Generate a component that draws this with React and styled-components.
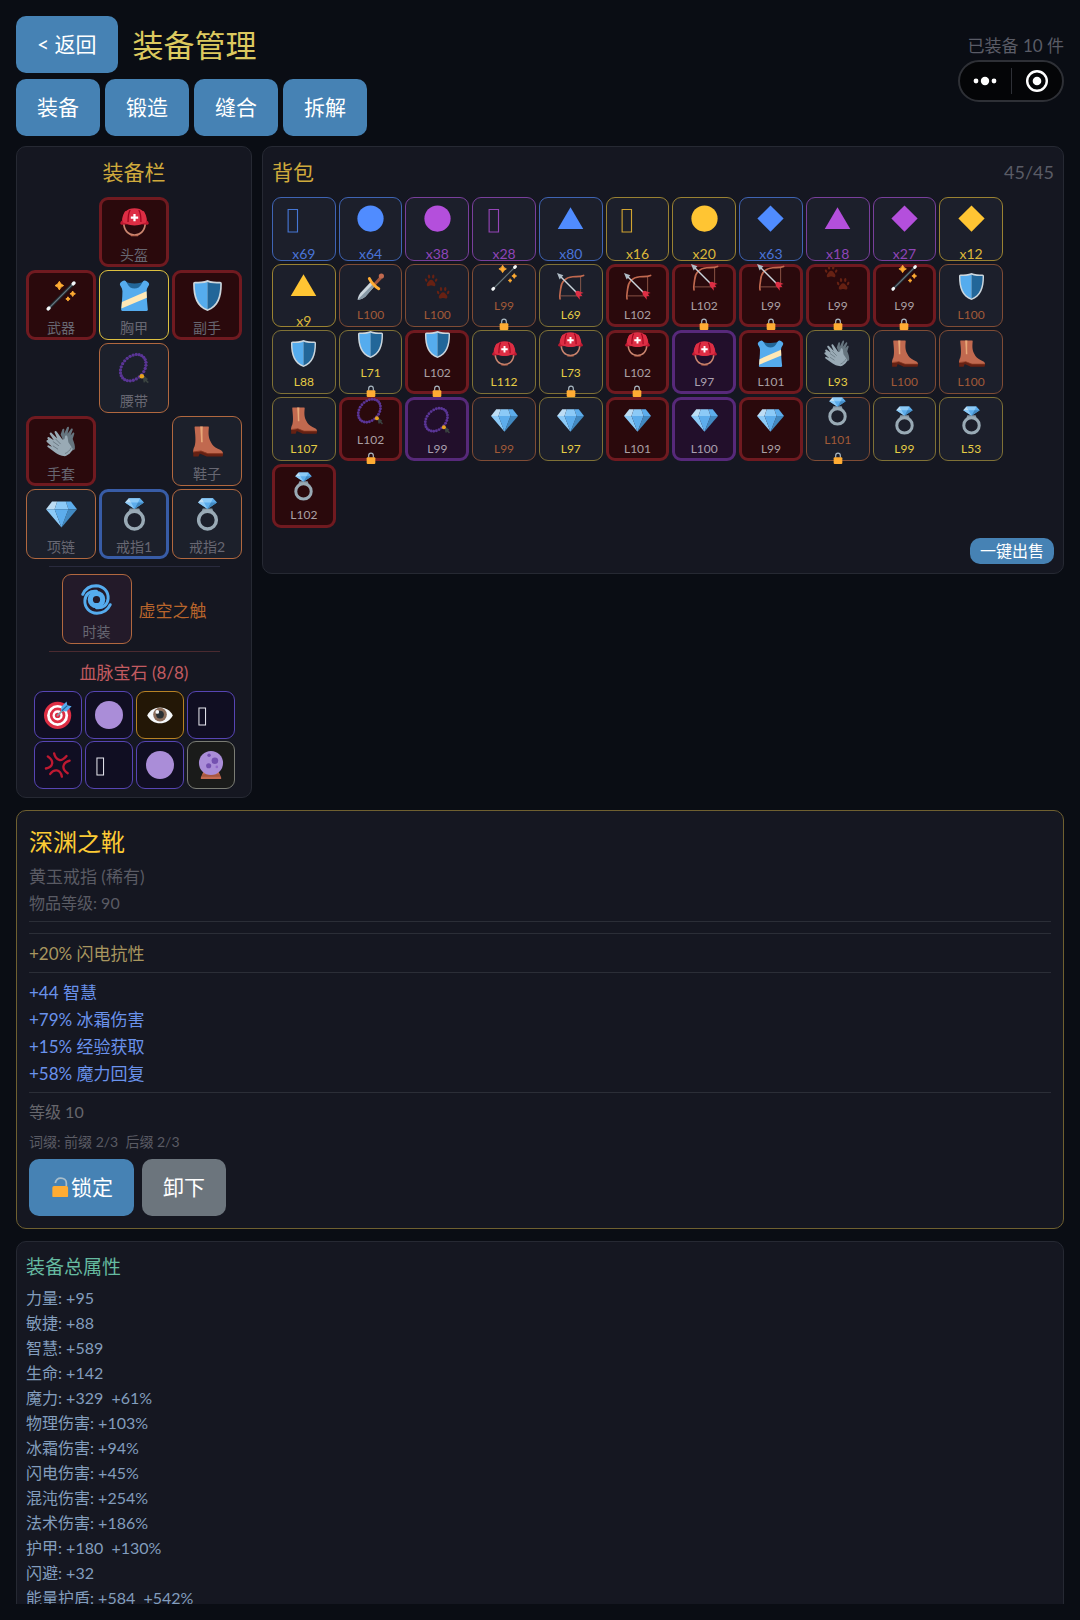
import styled, { createGlobalStyle, css } from "styled-components";

const GlobalStyle = createGlobalStyle`
  * {
    box-sizing: border-box;
  }

  body {
    margin: 0;
    background: #0a0d14;
    font-family: Lato, "Noto Sans CJK SC", sans-serif;
    color: #e8e8ec;
  }

  button {
    font-family: inherit;
    cursor: pointer;
  }
`;

const Page = styled.div`
  height: 100vh;
  padding: 16px;
  position: relative;
`;

const Content = styled.main`
  height: 100%;
  display: flex;
  flex-direction: column;
  overflow-y: auto;
  scrollbar-width: none;

  > * {
    flex-shrink: 0;
  }
`;

const Header = styled.header`
  display: flex;
  align-items: center;
  gap: 15px;
`;

const Title = styled.h1`
  margin: 0;
  flex: 1;
  font-size: 31px;
  font-weight: 400;
  line-height: 40px;
  color: #dcc95f;
`;

const EquippedCount = styled.span`
  font-size: 17px;
  color: #5a5c66;
`;

const Button = styled.button`
  display: flex;
  align-items: center;
  justify-content: center;
  height: 57px;
  padding: 0 21px 3px;
  border: none;
  border-radius: 10px;
  background: ${({ $muted }) => ($muted ? "#6c757d" : "#4682b4")};
  color: #fff;
  font-size: 21px;
`;

const SmallButton = styled(Button)`
  height: 26px;
  padding: 0 10px 2px;
  font-size: 16px;
  margin: 10px 0 0 auto;
`;

const Tabs = styled.nav`
  display: flex;
  gap: 5px;
  margin: 6px 0 10px;
`;

const Capsule = styled.div`
  position: absolute;
  top: 60px;
  right: 16px;
  width: 106px;
  height: 42px;
  display: flex;
  align-items: center;
  border: 2px solid #2e3036;
  border-radius: 21px;
  background: #040507;
`;

const CapsuleButton = styled.button`
  flex: 1;
  height: 26px;
  padding: 0;
  border: none;
  background: none;

  & + & {
    border-left: 1px solid #2e3036;
  }

  svg {
    display: block;
    margin: auto;
  }
`;

const Panels = styled.div`
  display: flex;
  align-items: flex-start;
  gap: 10px;
`;

const Panel = styled.section`
  padding: 9px;
  border: 1px solid #262933;
  border-radius: 10px;
  background: #151721;
`;

const EquipPanel = styled(Panel)`
  width: 236px;
  padding-bottom: 8px;
  display: flex;
  flex-direction: column;
  align-items: center;
`;

const BagPanel = styled(Panel)`
  flex: 1;
  min-width: 0;
`;

const PanelTitle = styled.h2`
  margin: 0;
  font-size: 21px;
  font-weight: 400;
  line-height: 32px;
  color: #cfaa3c;
`;

const SlotGrid = styled.div`
  display: grid;
  grid-template-columns: repeat(3, 70px);
  grid-template-areas:
    ". helmet ."
    "weapon chest offhand"
    ". belt ."
    "gloves . boots"
    "amulet ring1 ring2";
  gap: 3px;
  margin-top: 9px;
`;

const tones = {
  red: css`
    border: 3px solid #701a20;
    background: #2a090c;
  `,
  purple: css`
    border: 3px solid #57297a;
    background: #220f2b;
  `,
  blue: css`
    border: 3px solid #385ca6;
    background: #1c202b;
  `,
  orange: css`
    border: 1px solid #b1683f;
    background: #1c202b;
  `,
  gold: css`
    border: 1px solid #dcc040;
    background: #1c202b;
  `,
  fashion: css`
    border: 1px solid #b1683f;
    background: #231a29;
  `,
  dimOrange: css`
    border: 1px solid #7f4c35;
    background: #1c1f2b;
  `,
  dimGold: css`
    border: 1px solid #7f7136;
    background: #1c1f2b;
  `,
  stackBlue: css`
    border: 1px solid #3f64b4;
    background: #1c1f2b;
  `,
  stackPurple: css`
    border: 1px solid #793f9c;
    background: #1c1f2b;
  `,
  stackGold: css`
    border: 1px solid #9a8232;
    background: #1c1f2b;
  `,
  gem: css`
    border: 1px solid #5745b4;
    background: #100e22;
  `,
  gemGold: css`
    border: 1px solid #b88224;
    background: #231706;
  `,
  gemGray: css`
    border: 1px solid #7a7c74;
    background: #1a1b1a;
  `,
};

const Cell = styled.button`
  display: flex;
  flex-direction: column;
  align-items: center;
  justify-content: center;
  padding: 0;
  border-radius: 9px;
  ${({ $tone }) => tones[$tone]}
`;

const Slot = styled(Cell)`
  width: 70px;
  height: 70px;
  grid-area: ${({ $area }) => $area};
`;

const IconBox = styled.span`
  display: flex;
  flex-shrink: 0;
  align-items: center;
  height: ${({ $height }) => $height}px;

  svg {
    display: block;
    overflow: visible;
  }
`;

const SlotLabel = styled.span`
  font-size: 14px;
  line-height: 20px;
  color: #676772;
`;

const Divider = styled.hr`
  width: 171px;
  height: 1px;
  margin: 7px 0;
  border: none;
  background: ${({ $color }) => $color};
`;

const FashionRow = styled.div`
  display: flex;
  align-items: center;
  gap: 7px;
`;

const FashionName = styled.span`
  font-size: 17px;
  color: #b8652c;
`;

const GemTitle = styled.h3`
  margin: 0 0 4px;
  font-size: 17px;
  font-weight: 400;
  line-height: 28px;
  color: #c25b60;
`;

const GemGrid = styled.div`
  display: grid;
  grid-template-columns: repeat(4, 48px);
  gap: 2px 3px;
`;

const Gem = styled(Cell)`
  height: 48px;
`;

const BagHeader = styled.div`
  display: flex;
  justify-content: space-between;
  align-items: center;
`;

const BagCount = styled.span`
  font-size: 18px;
  color: #5a5c66;
`;

const BagGrid = styled.div`
  display: grid;
  grid-template-columns: repeat(11, 1fr);
  gap: 3px;
  max-width: 731px;
  margin-top: 9px;
`;

const BagItem = styled.div`
  min-width: 0;
  aspect-ratio: 1;
`;

const BagCell = styled(Cell)`
  width: 100%;
  height: 100%;
`;

const Level = styled.span`
  font-size: 12px;
  line-height: 18px;
  color: ${({ $color }) => $color};
`;

const StackCount = styled.span`
  font-size: 14px;
  line-height: 20px;
  color: ${({ $color }) => $color};
`;

const DetailPanel = styled(Panel)`
  display: flex;
  flex-direction: column;
  margin: 12px 0;
  padding: 12px;
  border-color: #6f6030;
`;

const DetailDivider = styled(Divider)`
  width: 100%;
  margin: 5px 0 6px;
`;

const ItemName = styled.h2`
  margin: 0 0 2px;
  font-size: 24px;
  font-weight: 400;
  line-height: 38px;
  color: #fccb35;
`;

const Line = styled.div`
  font-size: 17px;
  line-height: 27px;
  color: ${({ $color }) => $color};
`;

const SmallLine = styled(Line)`
  font-size: 16px;
  line-height: 26px;
`;

const AffixLine = styled(Line)`
  margin: 4px 0;
  font-size: 14px;
  line-height: 26px;
  white-space: pre;
`;

const Actions = styled.div`
  display: flex;
  gap: 8px;
`;

const StatsTitle = styled(PanelTitle)`
  font-size: 19px;
  color: #65baa0;
`;

const StatList = styled.ul`
  margin: 2px 0 0;
  padding: 0;
  list-style: none;
  font-size: 16px;
  line-height: 25px;
  color: #829dbd;
  white-space: pre;
`;

const beadAngles = Array.from({ length: 26 }, (_, i) => (i * 2 * Math.PI) / 26);

const Paw = (props) => (
  <g fill="#662113" {...props}>
    <path d="M8 7.5c-2.500 0-3 2-4.500 3.500S1.500 16 4 16c1.500 0 2.500-.8 4-.8s2.500.8 4 .8c2.500 0 2-3.500.5-5S10.500 7.500 8 7.500z" />
    <ellipse cx="1.3" cy="8" rx="1.5" ry="2.4" transform="rotate(-25 1.3 8)" />
    <ellipse cx="5.2" cy="3.3" rx="1.6" ry="2.7" transform="rotate(-8 5.2 3.3)" />
    <ellipse cx="10.8" cy="3.3" rx="1.6" ry="2.7" transform="rotate(8 10.8 3.3)" />
    <ellipse cx="14.7" cy="8" rx="1.5" ry="2.4" transform="rotate(25 14.7 8)" />
  </g>
);

const Spark = ({ x, y, r }) => {
  const q = r * 0.25;
  return (
    <path
      fill="#FFAC33"
      stroke="#FFAC33"
      strokeWidth="1"
      strokeLinejoin="round"
      d={`M${x} ${y - r}Q${x + q} ${y - q} ${x + r} ${y}Q${x + q} ${y + q} ${x} ${y + r}Q${x - q} ${y + q} ${x - r} ${y}Q${x - q} ${y - q} ${x} ${y - r}z`}
    />
  );
};

const drawings = {
  helmet: (
    <>
      <path d="M5.5 18c0 9 5 14.5 12.5 14.5S30.5 27 30.5 18" fill="none" stroke="#C9856F" strokeWidth="2" />
      <path d="M13 32c2 1.3 8 1.3 10 0l-1 2h-8z" fill="#C1694F" />
      <path d="M3.500 17C3.500 7 9 1.500 18 1.500S32.500 7 32.500 17c-5-1.500-24-1.500-29 0z" fill="#DD2E44" />
      <path d="M1.500 19c0-2 1.500-3 3-3.500 5-1.700 22-1.700 27 0 1.500.5 3 1.500 3 3.500 0 1.500-1 1.700-2.500 1.500-8-1.200-20-1.200-28 0-1.500.2-2.500 0-2.500-1.500z" fill="#BE1931" />
      <path d="M7 5c-2 4-2.500 8-2.500 13 3 .5 5.500 2.500 8.500 3 3 .6 7 .6 10 0 3-.5 5.500-2.500 8.500-3C31.500 13 31 9 29 5" fill="#DD2E44" />
      <path d="M13 3.500c-2 3-2.500 8-2.500 14M23 3.500c2 3 2.500 8 2.500 14" fill="none" stroke="#A0041E" strokeWidth="1.5" />
      <path d="M16.700 8h2.600v3h3v2.600h-3v3h-2.600v-3h-3V11h3z" fill="#fff" />
    </>
  ),
  wand: (
    <>
      <path d="M2.500 33.500l30-30" stroke="#1f2329" strokeWidth="4" strokeLinecap="round" />
      <path d="M5 31L30 6" stroke="#66757F" strokeWidth="1.5" />
      <path d="M2.500 33.500l1-1M31.500 4.500l1-1" stroke="#F5F8FA" strokeWidth="4" strokeLinecap="round" />
      <Spark x={15.5} y={6.5} r={5} />
      <Spark x={31} y={16} r={3.2} />
      <Spark x={25.5} y={22} r={2.5} />
    </>
  ),
  shirt: (
    <>
      <path d="M6 1c4 4 20 4 24 0l-4 11H10z" fill="#226699" />
      <path d="M6 .5C7.500.5 8.500 2 9.500 4c2 4 5 6 8.500 6s6.500-2 8.500-6c1-2 2-3.500 3.500-3.500 2.500.5 5 2.500 5 4.500S32 9 32 13c0 8 1 15 1.500 21.500 0 1-1 1.500-2.500 1.500H5c-1.500 0-2.500-.5-2.500-1.500C3 28 4 21 4 13 4 9 1 7 1 5S3.500 1 6 .5z" fill="#55ACEE" />
      <path d="M32 13l.4 7.500L2.800 33l.6-7.500z" fill="#FFE8B6" />
    </>
  ),
  shield: (
    <>
      <path d="M18 0c4 2 10 2 14.500 2 1.500 0 2.200 1 2.200 2.500C34.700 20 31 31 18 36 5 31 1.300 20 1.300 4.500 1.300 3 2 2 3.500 2 8 2 14 2 18 0z" fill="#CCD6DD" />
      <path d="M18 2.200C14 4 8 4 3.200 4 3.200 19.500 7 29.500 18 34z" fill="#55ACEE" />
      <path d="M18 2.200C22 4 28 4 32.800 4 32.800 19.500 29 29.500 18 34z" fill="#226699" />
    </>
  ),
  beads: (
    <>
      <g fill="#5a3596">
        {beadAngles.map((a) => (
          <circle
            key={a}
            cx={16.5 + 12.2 * Math.cos(a) - 8.5 * Math.sin(a)}
            cy={17 - 12 * Math.cos(a) - 9.5 * Math.sin(a)}
            r="1.9"
          />
        ))}
      </g>
      <path d="M27 28l7 6.500M28 27l5 4M29 30l.5 4" stroke="#3a4340" strokeWidth="2" />
      <circle cx="26.5" cy="27" r="2.7" fill="#E8A31E" />
    </>
  ),
  gloves: (
    <>
      <path d="M17 10l2-6c.5-1.500 2.500-1 2.300.5L21 9l3.500-7.500c.7-1.400 2.700-.6 2.200 1L25 9l4-5.500c1-1.200 2.600-.2 2 1.200L28.500 11l2.500-3c1-1 2.300 0 1.800 1.300L31 15c2 5 3 8 2.500 12L26 31z" fill="#66757F" />
      <path d="M2 15c-1.200-1.300.2-3 1.700-2L9 16.500 4.500 9.500C3.600 8 5.500 6.800 6.600 8L13 14.500 10 7.500c-.5-1.600 1.300-2.500 2.300-1.200l6.500 9.200c2 .8 3 0 3.200-3 .2-1.800 2.400-2 3 .2l1 6.300 5 7.500c-1 4-5 7.500-9 8.500-5-.5-8-2-11-4l-9-6.500c-1.200-1 0-2.700 1.400-2l3.600 1.700L1 18.500c-1.200-1 0-3 1.500-2z" fill="#99AAB5" />
      <path d="M8 18l7 5M11 15l6 6M8 23l6 4M22 32c3-1 6-4 7.500-7" fill="none" stroke="#66757F" strokeWidth="1" />
    </>
  ),
  boot: (
    <>
      <path d="M1.500 28v7.500h6L9 32l8 3.500h18c1 0 1.500-3 1-4.500z" fill="#662113" />
      <path d="M3.500.5h15.300c.6 0 .9.400.8 1-.8 8-.5 12 2.400 17.500 1.500 3 4 6 8 7.500 4 1.600 6 3 6 5.500H18.500l-8-3-9 1.500c-.3-2.500.2-4.500 1.500-7C5 18 3.500 8 3 1.500c0-.6.2-1 .5-1z" fill="#C1694F" />
      <path d="M9.500.5h3c-.3 6-.3 13 0 18.500h-2C10.500 14 10 7 9.500.5z" fill="#E8A878" />
      <path d="M1.500 30l9-1 8 3.200H36" fill="none" stroke="#8a3822" strokeWidth="1" />
    </>
  ),
  gem: (
    <>
      <path fill="#BDDDF4" d="M13 3H7l-7 9h10z" />
      <path fill="#5DADEC" d="M36 12l-7-9h-6l3 9z" />
      <path fill="#4289C1" d="M26 12h10L18 33z" />
      <path fill="#8CCAF7" d="M10 12H0l18 21zm3-9l-3 9h16l-3-9z" />
      <path fill="#5DADEC" d="M18 33l-8-21h16z" />
    </>
  ),
  ring: (
    <>
      <path d="M12.500 11h11l2 5h-15z" fill="#8899A6" />
      <circle cx="18" cy="24.5" r="10.3" fill="none" stroke="#99AAB5" strokeWidth="4" />
      <path d="M11.500-.8h13l4.500 5L18 11.500 7 4.200z" fill="#5DADEC" />
      <path d="M11.500-.8h13L22 4.200h-8zM7 4.200h7l4 7.300z" fill="#8CCAF7" />
      <path d="M11.500-.8L14 4.200H7z" fill="#BDDDF4" />
      <path d="M29 4.200h-7l-4 7.300z" fill="#4289C1" />
    </>
  ),
  cyclone: (
    <g fill="none" stroke="#55ACEE" strokeLinecap="round">
      <circle cx="18" cy="18" r="7.2" strokeWidth="6" />
      <path d="M2 12C5 5.500 11 2 17.500 2 26 2.300 32 8.500 31.500 17 31 24 25.500 28.500 18 27.500" strokeWidth="3.4" />
      <path d="M34 24C31 30.500 25 34 18.500 34 10 33.700 4 27.500 4.500 19 5 12 10.500 7.500 18 8.500" strokeWidth="3.4" />
    </g>
  ),
  target: (
    <>
      <circle cx="17.5" cy="18.5" r="17.5" fill="#DD2E44" />
      <circle cx="17.5" cy="18.5" r="13.5" fill="#fff" />
      <circle cx="17.5" cy="18.5" r="10" fill="#DD2E44" />
      <circle cx="17.5" cy="18.5" r="6.5" fill="#fff" />
      <circle cx="17.5" cy="18.5" r="3.5" fill="#DD2E44" />
      <path d="M17.500 18.500L29 7" stroke="#8899A6" strokeWidth="2.5" strokeLinecap="round" />
      <path d="M22 13l.5-6L29 .5l1 5 5.500 1.200L29 13.500z" fill="#55ACEE" />
      <path d="M23 12.500L30 6" stroke="#226699" strokeWidth="1.5" />
    </>
  ),
  orb: <circle cx="18" cy="18" r="18" fill="#AA8DD8" />,
  eye: (
    <>
      <path d="M1.500 18.500C5 12 11 8.500 18 8.500s13 3.500 16.500 10C31 25 25 28.500 18 28.500S5 25 1.500 18.500z" fill="#F5F8FA" />
      <circle cx="18" cy="17.5" r="8.8" fill="#8A6D5B" />
      <circle cx="18" cy="17.5" r="5" fill="#292F33" />
      <circle cx="14.5" cy="14" r="2.4" fill="#F5F8FA" />
    </>
  ),
  anger: (
    <g fill="none" stroke="#BE1931" strokeWidth="3" strokeLinecap="round">
      <path d="M13 3c1 5 3 7.500 6.500 8.500S26 10 29 6.500" />
      <path d="M33 12.500c-5 1.500-7.500 3.500-8 7s1 6 5.500 9" />
      <path d="M23 33c-1-5-3-7.500-6.500-8s-6 1-8.500 4.500" />
      <path d="M2.500 22.500c5-1 7.500-3 8-6.500s-1-6-5.500-9" />
    </g>
  ),
  crystal: (
    <>
      <path d="M8 27h20l3 7c.5 1.300 0 2-1.200 2H6.200C5 36 4.500 35.300 5 34z" fill="#C1694F" />
      <path d="M7 30h22l1 3H6z" fill="#A5563F" />
      <circle cx="18" cy="15.5" r="15.5" fill="#AA8DD8" />
      <circle cx="23" cy="12.5" r="4.3" fill="#7450B0" />
      <circle cx="15" cy="19" r="3.3" fill="#7450B0" />
      <circle cx="15.5" cy="5.5" r="2.2" fill="#7450B0" />
      <circle cx="25.5" cy="20.5" r="1.7" fill="#9268CA" />
    </>
  ),
  dagger: (
    <>
      <path d="M24 17L11 31.500C8 34 4 35.500.8 35.500 1.200 32 3 28.500 5 26L18.500 11.500z" fill="#CCD6DD" />
      <path d="M21.500 14.500L.8 35.500C4 35.500 8 34 11 31.500L24 17z" fill="#8899A6" />
      <path d="M22 14l8-9 3 3-8.500 8.500z" fill="#A0553C" />
      <circle cx="32.5" cy="4" r="3.5" fill="#C1694F" />
      <path d="M16.500 7.500c2.500 5 7 10 12.500 13.500" stroke="#FFAC33" strokeWidth="4" strokeLinecap="round" fill="none" />
    </>
  ),
  paws: (
    <>
      <Paw transform="translate(1.5 1.5)" />
      <Paw transform="translate(17.5 18)" />
    </>
  ),
  bow: (
    <>
      <path d="M31.500 4v26.500H4.500" stroke="#A86A56" strokeWidth="1" fill="none" />
      <path d="M4 34.500c-1-6 .5-9 .8-13C5.500 12 11 6 21 5c5-.5 9 .5 14.500-1.800" fill="none" stroke="#C1694F" strokeWidth="2.2" strokeLinecap="round" />
      <path d="M4 4l25 25" stroke="#CCD6DD" strokeWidth="2" />
      <path d="M0 0l8.500 3-5 5.500z" fill="#AEBBC5" />
      <path d="M24.500 24.500l3.500-1 7.500 3-4 1 2.500 3.500-4-.5.5 5-5.500-6.500z" fill="#DD2E44" />
    </>
  ),
  lock: (
    <>
      <path d="M11 17v-6c0-4.500 3-7.500 7-7.500s7 3 7 7.500v6" fill="none" stroke="#AAB8C2" strokeWidth="3.5" />
      <rect x="5" y="16" width="26" height="20" rx="3" fill="#FFAC33" />
    </>
  ),
  unlock: (
    <>
      <path d="M9 12c1-5 4-8.500 9.500-8.500S28 7 28 12v6" fill="none" stroke="#A9BECB" strokeWidth="3" />
      <rect x="4" y="17" width="27" height="20" rx="3" fill="#FFAC33" />
    </>
  ),
  circle: <circle cx="18" cy="18" r="17.5" fill="currentColor" />,
  triangle: <path d="M18 3l17 29H1z" fill="currentColor" />,
  diamond: <path d="M18 .5L35.500 18 18 35.500.5 18z" fill="currentColor" />,
  missing: <path d="M-2.500 6h12.500v30H-2.500z" fill="none" stroke="currentColor" strokeWidth="1.5" opacity=".8" />,
  missingGem: <path d="M2.500 9h8.500v22H2.500z" fill="none" stroke="currentColor" strokeWidth="1.3" />,
};

const Icon = ({ name, size, color }) => (
  <svg width={size} height={size} viewBox="0 0 36 36" color={color} aria-hidden="true">
    {drawings[name]}
  </svg>
);

const TABS = ["装备", "锻造", "缝合", "拆解"];

const SLOTS = [
  ["helmet", "helmet", "头盔", "red"],
  ["weapon", "wand", "武器", "red"],
  ["chest", "shirt", "胸甲", "gold"],
  ["offhand", "shield", "副手", "red"],
  ["belt", "beads", "腰带", "orange"],
  ["gloves", "gloves", "手套", "red"],
  ["boots", "boot", "鞋子", "orange"],
  ["amulet", "gem", "项链", "orange"],
  ["ring1", "ring", "戒指1", "blue"],
  ["ring2", "ring", "戒指2", "orange"],
];

const GEMS = [
  ["target", "gem"],
  ["orb", "gem"],
  ["eye", "gemGold"],
  ["missingGem", "gem"],
  ["anger", "gem"],
  ["missingGem", "gem"],
  ["orb", "gem"],
  ["crystal", "gemGray"],
];

const STACK_COLORS = {
  stackBlue: ["#508cff", "#4a74d8"],
  stackPurple: ["#b44fdc", "#8f45b8"],
  stackGold: ["#ffc533", "#dcb83a"],
};

const LEVEL_COLORS = {
  red: "#aaa0a4",
  purple: "#aaa0b0",
  dimOrange: "#a15a38",
  dimGold: "#e6cd45",
};

const STACKS = [
  ["missing", "stackBlue", 69],
  ["circle", "stackBlue", 64],
  ["circle", "stackPurple", 38],
  ["missing", "stackPurple", 28],
  ["triangle", "stackBlue", 80],
  ["missing", "stackGold", 16],
  ["circle", "stackGold", 20],
  ["diamond", "stackBlue", 63],
  ["triangle", "stackPurple", 18],
  ["diamond", "stackPurple", 27],
  ["diamond", "stackGold", 12],
  ["triangle", "stackGold", 9],
];

const ITEMS = [
  ["dagger", "dimOrange", 100],
  ["paws", "dimOrange", 100],
  ["wand", "dimOrange", 99, true],
  ["bow", "dimGold", 69],
  ["bow", "red", 102],
  ["bow", "red", 102, true],
  ["bow", "red", 99, true],
  ["paws", "red", 99, true],
  ["wand", "red", 99, true],
  ["shield", "dimOrange", 100],
  ["shield", "dimGold", 88],
  ["shield", "dimGold", 71, true],
  ["shield", "red", 102, true],
  ["helmet", "dimGold", 112],
  ["helmet", "dimGold", 73, true],
  ["helmet", "red", 102, true],
  ["helmet", "purple", 97],
  ["shirt", "red", 101],
  ["gloves", "dimGold", 93],
  ["boot", "dimOrange", 100],
  ["boot", "dimOrange", 100],
  ["boot", "dimGold", 107],
  ["beads", "red", 102, true],
  ["beads", "purple", 99],
  ["gem", "dimOrange", 99],
  ["gem", "dimGold", 97],
  ["gem", "red", 101],
  ["gem", "purple", 100],
  ["gem", "red", 99],
  ["ring", "dimOrange", 101, true],
  ["ring", "dimGold", 99],
  ["ring", "dimGold", 53],
  ["ring", "red", 102],
];

const MODS = ["+44 智慧", "+79% 冰霜伤害", "+15% 经验获取", "+58% 魔力回复"];

const STATS = [
  "力量: +95",
  "敏捷: +88",
  "智慧: +589",
  "生命: +142",
  "魔力: +329  +61%",
  "物理伤害: +103%",
  "冰霜伤害: +94%",
  "闪电伤害: +45%",
  "混沌伤害: +254%",
  "法术伤害: +186%",
  "护甲: +180  +130%",
  "闪避: +32",
  "能量护盾: +584  +542%",
];

const EquipSlot = ({ area, icon, label, tone }) => (
  <Slot $area={area} $tone={tone}>
    <IconBox $height={45}>
      <Icon name={icon} size={31} />
    </IconBox>
    <SlotLabel>{label}</SlotLabel>
  </Slot>
);

const StackCell = ({ icon, tone, count }) => {
  const [fill, text] = STACK_COLORS[tone];
  return (
    <BagItem>
      <BagCell $tone={tone}>
        <IconBox $height={51}>
          <Icon name={icon} size={27} color={fill} />
        </IconBox>
        <StackCount $color={text}>x{count}</StackCount>
      </BagCell>
    </BagItem>
  );
};

const ItemCell = ({ icon, tone, level, locked }) => (
  <BagItem>
    <BagCell $tone={tone}>
      <IconBox $height={39}>
        <Icon name={icon} size={27} />
      </IconBox>
      <Level $color={LEVEL_COLORS[tone]}>L{level}</Level>
      {locked && (
        <IconBox $height={18}>
          <Icon name="lock" size={12} />
        </IconBox>
      )}
    </BagCell>
  </BagItem>
);

const App = () => {
  return (
    <Page>
      <GlobalStyle />
      <Content>
        <Header>
          <Button>{"< 返回"}</Button>
          <Title>装备管理</Title>
          <EquippedCount>已装备 10 件</EquippedCount>
        </Header>
        <Tabs>
          {TABS.map((tab) => (
            <Button key={tab}>{tab}</Button>
          ))}
        </Tabs>

        <Panels>
          <EquipPanel>
            <PanelTitle>装备栏</PanelTitle>
            <SlotGrid>
              {SLOTS.map(([area, icon, label, tone]) => (
                <EquipSlot key={area} area={area} icon={icon} label={label} tone={tone} />
              ))}
            </SlotGrid>
            <Divider $color="#292a3d" />
            <FashionRow>
              <EquipSlot icon="cyclone" label="时装" tone="fashion" />
              <FashionName>虚空之触</FashionName>
            </FashionRow>
            <Divider $color="#4a2a30" />
            <GemTitle>血脉宝石 (8/8)</GemTitle>
            <GemGrid>
              {GEMS.map(([icon, tone], i) => (
                <Gem key={i} $tone={tone} aria-label={`血脉宝石 ${i + 1}`}>
                  <IconBox $height={28}>
                    <Icon name={icon} size={28} color="#e8e8f0" />
                  </IconBox>
                </Gem>
              ))}
            </GemGrid>
          </EquipPanel>

          <BagPanel>
            <BagHeader>
              <PanelTitle>背包</PanelTitle>
              <BagCount>45/45</BagCount>
            </BagHeader>
            <BagGrid>
              {STACKS.map(([icon, tone, count]) => (
                <StackCell key={count} icon={icon} tone={tone} count={count} />
              ))}
              {ITEMS.map(([icon, tone, level, locked], i) => (
                <ItemCell key={i} icon={icon} tone={tone} level={level} locked={locked} />
              ))}
            </BagGrid>
            <SmallButton>一键出售</SmallButton>
          </BagPanel>
        </Panels>

        <DetailPanel>
          <ItemName>深渊之靴</ItemName>
          <Line $color="#5a5b64">黄玉戒指 (稀有)</Line>
          <SmallLine $color="#5a5b64">物品等级: 90</SmallLine>
          <DetailDivider $color="#2b2e37" />
          <DetailDivider $color="#2b2e37" />
          <Line $color="#a8965f">+20% 闪电抗性</Line>
          <DetailDivider $color="#2b2e37" />
          {MODS.map((mod) => (
            <Line key={mod} $color="#6a92ec">
              {mod}
            </Line>
          ))}
          <DetailDivider $color="#2b2e37" />
          <SmallLine $color="#66666c">等级 10</SmallLine>
          <AffixLine $color="#5a5b64">{"词缀: 前缀 2/3  后缀 2/3"}</AffixLine>
          <Actions>
            <Button>
              <Icon name="unlock" size={21} />
              锁定
            </Button>
            <Button $muted>卸下</Button>
          </Actions>
        </DetailPanel>

        <Panel>
          <StatsTitle>装备总属性</StatsTitle>
          <StatList>
            {STATS.map((stat) => (
              <li key={stat}>{stat}</li>
            ))}
          </StatList>
        </Panel>
      </Content>

      <Capsule>
        <CapsuleButton aria-label="更多">
          <svg width="24" height="10" viewBox="0 0 24 10" fill="#fff">
            <circle cx="3" cy="5" r="2.4" />
            <circle cx="12" cy="5" r="4.2" />
            <circle cx="21" cy="5" r="2.4" />
          </svg>
        </CapsuleButton>
        <CapsuleButton aria-label="关闭">
          <svg width="24" height="24" viewBox="0 0 24 24">
            <circle cx="12" cy="12" r="9.8" fill="none" stroke="#fff" strokeWidth="2.4" />
            <circle cx="12" cy="12" r="4.3" fill="#fff" />
          </svg>
        </CapsuleButton>
      </Capsule>
    </Page>
  );
};

export default App;
